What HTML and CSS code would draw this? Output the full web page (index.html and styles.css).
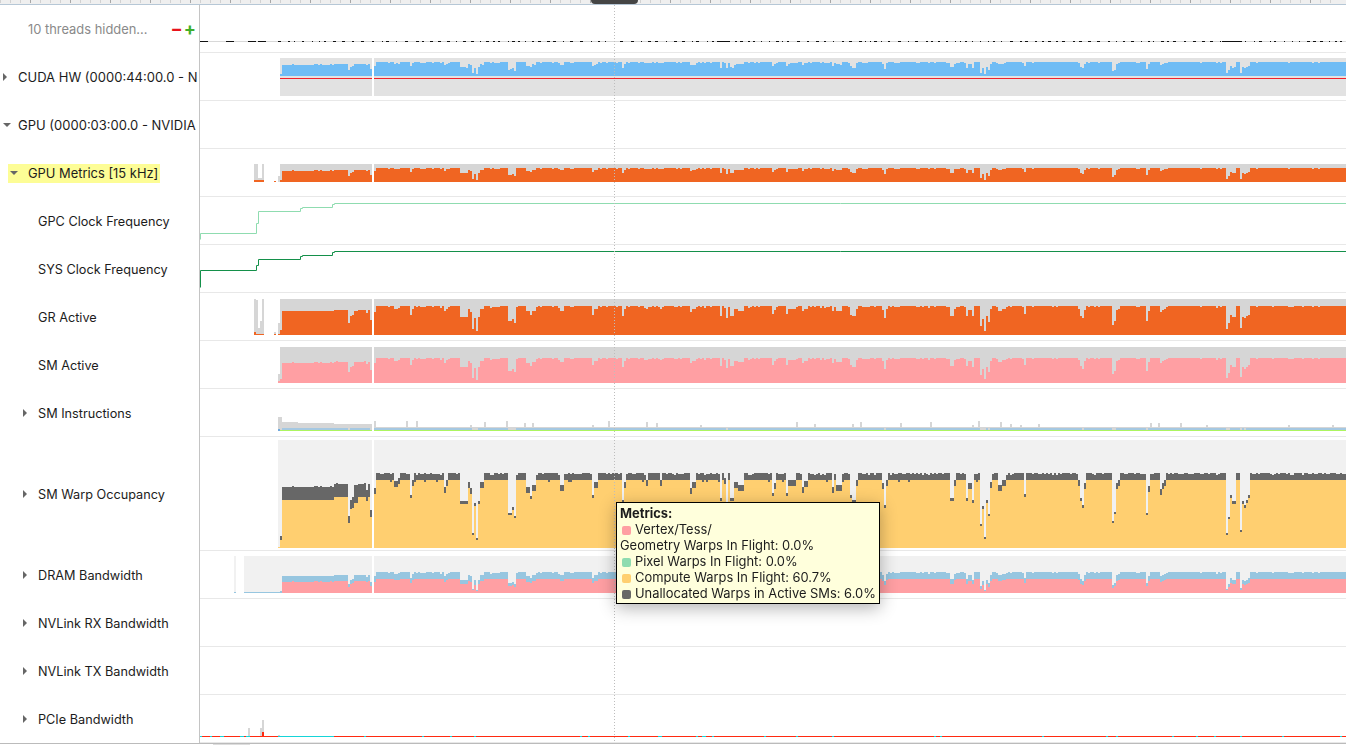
FILE: index.html
```html
<!DOCTYPE html>
<html lang="en">

<head>
    <meta charset="UTF-8">
    <title>GPU Trace Timeline</title>
    <link rel="stylesheet" href="styles.css">
</head>

<body>
    <div class="ruler">
        <div class="ruler-handle"></div>
    </div>

    <div class="timeline">
        <div class="row">
            <div class="label label-hidden">
                <span>10 threads hidden...</span>
                <span class="thread-btns"><span class="minus">&minus;</span><span class="plus">+</span></span>
            </div>
            <div class="track"><canvas id="threads" data-top="5" width="1146" height="47"></canvas></div>
        </div>
        <div class="row">
            <div class="label indent-0"><i class="caret-right"></i><span>CUDA HW (0000:44:00.0 - N</span></div>
            <div class="track"><canvas id="cuda" data-top="53" width="1146" height="47"></canvas></div>
        </div>
        <div class="row">
            <div class="label indent-0"><i class="caret-down"></i><span>GPU (0000:03:00.0 - NVIDIA</span></div>
            <div class="track"></div>
        </div>
        <div class="row">
            <div class="label indent-1">
                <div class="selected"><i class="caret-down"></i><span>GPU Metrics [15 kHz]</span></div>
            </div>
            <div class="track"><canvas id="metrics" data-top="149" width="1146" height="47"></canvas></div>
        </div>
        <div class="row">
            <div class="label indent-2"><span>GPC Clock Frequency</span></div>
            <div class="track"><canvas id="gpc" data-top="197" width="1146" height="47"></canvas></div>
        </div>
        <div class="row">
            <div class="label indent-2"><span>SYS Clock Frequency</span></div>
            <div class="track"><canvas id="sys" data-top="245" width="1146" height="47"></canvas></div>
        </div>
        <div class="row">
            <div class="label indent-2"><span>GR Active</span></div>
            <div class="track"><canvas id="gr" data-top="293" width="1146" height="47"></canvas></div>
        </div>
        <div class="row">
            <div class="label indent-2"><span>SM Active</span></div>
            <div class="track"><canvas id="sm" data-top="341" width="1146" height="47"></canvas></div>
        </div>
        <div class="row">
            <div class="label indent-2"><i class="caret-right"></i><span>SM Instructions</span></div>
            <div class="track"><canvas id="instr" data-top="389" width="1146" height="47"></canvas></div>
        </div>
        <div class="row row-tall">
            <div class="label indent-2"><i class="caret-right"></i><span>SM Warp Occupancy</span></div>
            <div class="track"><canvas id="warp" data-top="437" width="1146" height="113"></canvas></div>
        </div>
        <div class="row">
            <div class="label indent-2"><i class="caret-right"></i><span>DRAM Bandwidth</span></div>
            <div class="track"><canvas id="dram" data-top="551" width="1146" height="47"></canvas></div>
        </div>
        <div class="row">
            <div class="label indent-2"><i class="caret-right"></i><span>NVLink RX Bandwidth</span></div>
            <div class="track"></div>
        </div>
        <div class="row">
            <div class="label indent-2"><i class="caret-right"></i><span>NVLink TX Bandwidth</span></div>
            <div class="track"></div>
        </div>
        <div class="row">
            <div class="label indent-2"><i class="caret-right"></i><span>PCIe Bandwidth</span></div>
            <div class="track"><canvas id="pcie" data-top="695" width="1146" height="48"></canvas></div>
        </div>
    </div>

    <div class="hscroll">
        <div class="hscroll-thumb"></div>
    </div>

    <div class="cursor-line"></div>

    <div class="tooltip">
        <div class="tooltip-title">Metrics:</div>
        <div class="tooltip-line"><i class="swatch swatch-pink"></i>Vertex/Tess/</div>
        <div class="tooltip-line">Geometry Warps In Flight: 0.0%</div>
        <div class="tooltip-line"><i class="swatch swatch-green"></i>Pixel Warps In Flight: 0.0%</div>
        <div class="tooltip-line"><i class="swatch swatch-yellow"></i>Compute Warps In Flight: 60.7%</div>
        <div class="tooltip-line"><i class="swatch swatch-grey"></i>Unallocated Warps in Active SMs: 6.0%</div>
    </div>

    <script src="script.js"></script>
</body>

</html>
```

FILE: styles.css
```css
* {
    box-sizing: border-box;
}

html,
body {
    height: 100%;
}

body {
    margin: 0;
    background-color: #fff;
    font-family: 'Inter', 'Liberation Sans', sans-serif;
    font-size: 12.9px;
    color: #1c1c1c;
    overflow: hidden;
}

.ruler {
    position: relative;
    height: 5px;
    background-color: #efefef;
    background-image:
        repeating-linear-gradient(90deg, #a8a8a8 0, #a8a8a8 1px, transparent 1px, transparent 40px),
        repeating-linear-gradient(90deg, #d2d2d2 0, #d2d2d2 1px, transparent 1px, transparent 10px);
    background-size: 100% 3px;
    background-position: -10px 0;
    background-repeat: no-repeat;
    border-bottom: 1px solid #b6c7d6;
}

.ruler-handle {
    position: absolute;
    top: 0;
    left: 591px;
    width: 47px;
    height: 4px;
    background-color: #454545;
    border-radius: 0 0 5px 5px;
}

.row {
    display: flex;
    height: 48px;
}

.row-tall {
    height: 114px;
}

.label {
    display: flex;
    align-items: center;
    flex: 0 0 200px;
    border-right: 1px solid #c4c4c4;
    white-space: nowrap;
    overflow: hidden;
}

.track {
    flex: 1;
    border-bottom: 1px solid #e8e8e8;
    overflow: hidden;
}

.track canvas {
    display: block;
}

.indent-0 {
    padding-left: 3px;
    font-size: 13px;
}

.indent-0 i {
    width: 15px;
}

.indent-1 {
    padding-left: 8px;
}

.indent-2 {
    padding-left: 38px;
    font-size: 12.7px;
}

.indent-2 .caret-right {
    margin-left: -15px;
    width: 15px;
}

.label-hidden {
    padding-left: 28px;
    color: #8a8a8a;
}

.thread-btns {
    display: flex;
    gap: 1px;
    margin-left: 23px;
    font-size: 18px;
    font-weight: 700;
    line-height: 1;
}

.minus {
    color: #e8121c;
}

.plus {
    color: #3fae2a;
}

.selected {
    display: flex;
    align-items: center;
    height: 19px;
    padding: 0 2px 0 2px;
    background-color: #fdfd96;
}

.selected i {
    width: 18px;
}

.caret-right,
.caret-down {
    display: block;
    flex: none;
    position: relative;
    height: 8px;
}

.caret-right::before {
    content: "";
    position: absolute;
    top: 0;
    left: 0;
    border-left: 4px solid #666;
    border-top: 4px solid transparent;
    border-bottom: 4px solid transparent;
}

.caret-down::before {
    content: "";
    position: absolute;
    top: 2px;
    left: 0;
    border-top: 4px solid #666;
    border-left: 4px solid transparent;
    border-right: 4px solid transparent;
}

.hscroll {
    height: 2px;
    border-top: 1px solid #bbb;
}

.hscroll-thumb {
    width: 37px;
    height: 1px;
    margin-left: 213px;
    background-color: #ddd;
}

.cursor-line {
    position: absolute;
    top: 5px;
    left: 614px;
    width: 1px;
    height: 738px;
    background-image: repeating-linear-gradient(180deg, #bdbdbd 0, #bdbdbd 1px, transparent 1px, transparent 3px);
}

.tooltip {
    position: absolute;
    top: 502px;
    left: 616px;
    width: 264px;
    height: 102px;
    padding: 3px 3px;
    background-color: #ffffdc;
    border: 1px solid #000;
    box-shadow: 0 4px 16px rgba(0, 0, 0, 0.3);
    line-height: 16px;
    white-space: nowrap;
}

.tooltip-title {
    font-weight: 700;
}

.tooltip-line {
    display: flex;
    align-items: center;
}

.swatch {
    display: block;
    flex: none;
    width: 9px;
    height: 9px;
    margin: 0 4px 0 2px;
    border-radius: 2px;
}

.swatch-pink {
    background-color: #ff9fa3;
}

.swatch-green {
    background-color: #8fdcb0;
}

.swatch-yellow {
    background-color: #ffcf70;
}

.swatch-grey {
    background-color: #676767;
}
```

FILE: script.js
```js
// Sampled trace data is stored as dips from the steady state, one column is 2px wide
const END_X = 1346;
const COL = 2;

const DIPS = [
    [374, 376, 494], [394, 398, 487], [398, 400, 484], [410, 412, 498], [412, 414, 486], [444, 446, 493], [446, 448, 486],
    [460, 468, 504], [468, 470, 488], [470, 472, 494], [472, 474, 535], [474, 476, 506], [476, 478, 540],
    [478, 480, 504], [480, 484, 488], [508, 512, 515], [512, 514, 510], [514, 516, 518],
    [526, 530, 493], [530, 532, 499], [532, 536, 491], [560, 564, 491], [592, 594, 498],
    [594, 598, 488], [622, 624, 503], [624, 626, 488], [646, 648, 486], [660, 662, 486], [690, 692, 494],
    [692, 696, 488], [720, 722, 501], [724, 726, 484], [726, 728, 506], [730, 734, 501],
    [734, 738, 488], [738, 744, 491], [772, 774, 496], [774, 776, 489], [786, 788, 496], [788, 796, 486],
    [802, 804, 493], [804, 808, 487], [832, 834, 493], [836, 842, 491], [850, 852, 498], [852, 856, 503],
    [856, 858, 486], [882, 884, 489], [884, 886, 508], [886, 888, 486], [950, 954, 501], [954, 956, 486],
    [966, 968, 501], [968, 972, 489], [972, 974, 503], [980, 982, 526], [982, 984, 509], [984, 986, 539],
    [986, 988, 503], [988, 990, 516], [990, 992, 488], [998, 1002, 491], [1002, 1006, 486],
    [1024, 1026, 497], [1078, 1080, 486], [1080, 1082, 501], [1082, 1084, 508], [1084, 1086, 489],
    [1112, 1114, 523], [1114, 1116, 514], [1116, 1118, 489], [1118, 1120, 486],
    [1146, 1148, 515], [1148, 1150, 492], [1160, 1162, 495], [1162, 1164, 489], [1164, 1166, 486],
    [1226, 1228, 535], [1228, 1230, 519], [1230, 1232, 498], [1232, 1236, 504],
    [1240, 1242, 532], [1242, 1244, 504], [1244, 1246, 508], [1246, 1248, 503], [1248, 1250, 498]
];

// the first run before the gap has its own levels
const FIRST_RUN = [
    [278, 280, 547, 547], [280, 282, 540, 536], [282, 334, 500, 487], [334, 348, 497, 484],
    [348, 350, 523, 516], [350, 352, 509, 500], [352, 354, 508, 497], [354, 358, 503, 485],
    [358, 366, 497, 484], [366, 368, 501, 490], [368, 370, 497, 484], [370, 372, 517, 510]
];

let seed = 7;
function rand() {
    seed = (seed * 16807) % 2147483647;
    return seed / 2147483647;
}

function buildColumns() {
    const cols = [];
    for (let x = 278; x < END_X; x += COL) {
        if (x === 372) continue;
        let yt = 480;
        let gt = 473 + (rand() < 0.4 ? 1 : 0);
        const r = rand();
        if (x > 374 && r < 0.08) {
            gt = 475;
        }
        if (x > 374 && x < 1000 && r > 0.9) {
            yt = 482;
        }
        const wob = x < 1000 ? (rand() < 0.28 ? 1 : 0) : (rand() < 0.1 ? 1 : 0);
        cols.push({ x: x, yt: yt, gt: gt, wob: wob });
    }
    cols.forEach(c => {
        FIRST_RUN.forEach(s => {
            if (c.x >= s[0] && c.x < s[1]) {
                c.yt = s[2];
                c.gt = s[3];
                c.wob = 0;
                if (s[1] - s[0] > 4 && rand() < 0.3) c.gt -= 1;
            }
        });
        DIPS.forEach(d => {
            if (c.x >= d[0] && c.x < d[1]) {
                c.yt = d[2];
                const band = d[2] > 510 ? 2 : (d[2] > 495 ? 3 : 6);
                c.gt = d[2] - band;
            }
        });
        c.active = Math.min(1, (548 - c.gt) / 75);
    });
    return cols;
}

const columns = buildColumns();

function getCtx(id) {
    const canvas = document.getElementById(id);
    const ctx = canvas.getContext("2d");
    // draw with page coordinates
    ctx.translate(-200, -Number(canvas.dataset.top));
    return ctx;
}

function rect(ctx, color, x, y, w, h) {
    ctx.fillStyle = color;
    ctx.fillRect(x, y, w, h);
}

// grey background band with a bar that follows the activity of the GPU
function drawActivity(ctx, top, bottom, full, bg, color) {
    columns.forEach(c => {
        if (c.x < 280) return;
        rect(ctx, bg, c.x, top, COL, bottom - top);
        const h = Math.round(full * c.active) - (c.active > 0.95 ? c.wob : 0);
        rect(ctx, color, c.x, bottom - h, COL, h);
    });
}

function drawThreads() {
    const ctx = getCtx("threads");
    rect(ctx, "#d8d8d8", 200, 41, 1146, 1);
    const fixed = [[200, 8], [226, 8], [248, 8], [258, 8], [717, 13], [1222, 18]];
    fixed.forEach(d => rect(ctx, "#111", d[0], 41, d[1], 1));
    let x = 278;
    while (x < END_X) {
        const on = 1 + Math.floor(rand() * 3);
        rect(ctx, "#111", x, 41, on, 1);
        x += on + 3 + Math.floor(rand() * 6);
    }
}

function drawCuda() {
    const ctx = getCtx("cuda");
    columns.forEach(c => {
        if (c.x < 280) return;
        rect(ctx, "#e2e2e2", c.x, 58, COL, 38);
        const h = Math.max(2, Math.round(14 * c.active) - c.wob);
        rect(ctx, "#6fbcf5", c.x, 76 - h, COL, h);
        rect(ctx, "#f0202c", c.x, 78, COL, 1);
    });
}

function drawMetrics() {
    const ctx = getCtx("metrics");
    drawActivity(ctx, 164, 182, 14, "#d6d6d6", "#f06522");
    rect(ctx, "#d6d6d6", 254, 164, 4, 18);
    rect(ctx, "#d6d6d6", 258, 178, 4, 4);
    rect(ctx, "#d6d6d6", 262, 164, 2, 18);
    rect(ctx, "#f06522", 254, 180, 10, 2);
    rect(ctx, "#f06522", 274, 181, 2, 1);
    rect(ctx, "#d6d6d6", 278, 176, 2, 6);
}

function drawStep(ctx, color, points) {
    ctx.strokeStyle = color;
    ctx.lineWidth = 1;
    ctx.beginPath();
    points.forEach((p, i) => {
        if (i === 0) ctx.moveTo(p[0] + 0.5, p[1] + 0.5);
        else ctx.lineTo(p[0] + 0.5, p[1] + 0.5);
    });
    ctx.stroke();
}

function drawClocks() {
    drawStep(getCtx("gpc"), "#8fdcb0", [
        [200, 239], [200, 233], [256, 233], [256, 223], [258, 223], [258, 211], [300, 211],
        [300, 208], [302, 208], [302, 207], [332, 207], [332, 204], [334, 204], [334, 203], [1346, 203]
    ]);
    drawStep(getCtx("sys"), "#14904a", [
        [200, 287], [200, 270], [256, 270], [256, 265], [258, 265], [258, 259], [300, 259],
        [300, 256], [302, 256], [302, 255], [332, 255], [332, 252], [334, 252], [334, 251], [1346, 251]
    ]);
}

function drawGr() {
    const ctx = getCtx("gr");
    drawActivity(ctx, 299, 335, 29, "#d6d6d6", "#f06522");
    rect(ctx, "#d6d6d6", 254, 299, 2, 36);
    rect(ctx, "#d6d6d6", 256, 300, 2, 35);
    rect(ctx, "#d6d6d6", 258, 328, 4, 7);
    rect(ctx, "#d6d6d6", 260, 321, 2, 14);
    rect(ctx, "#d6d6d6", 262, 299, 2, 36);
    rect(ctx, "#f06522", 254, 332, 2, 3);
    rect(ctx, "#f06522", 256, 334, 8, 1);
    rect(ctx, "#d6d6d6", 274, 332, 2, 3);
    rect(ctx, "#f06522", 274, 334, 2, 1);
    rect(ctx, "#d6d6d6", 278, 323, 2, 12);
    rect(ctx, "#f06522", 278, 334, 2, 1);
}

function drawSm() {
    const ctx = getCtx("sm");
    drawActivity(ctx, 347, 383, 25, "#d6d6d6", "#ff9fa3");
    rect(ctx, "#d6d6d6", 278, 374, 2, 9);
    rect(ctx, "#ff9fa3", 278, 381, 2, 2);
    rect(ctx, "#ff9fa3", 280, 379, 2, 4);
}

function drawInstructions() {
    const ctx = getCtx("instr");
    columns.forEach(c => {
        let top = 427;
        if (c.x < 282) top = 417;
        else if (c.x < 298) top = 422;
        else if (c.x < 334) top = 423;
        else if (c.x < 372) top = 424;
        else if (rand() < 0.08) top = 421 + Math.floor(rand() * 5);
        rect(ctx, "#d6d6d6", c.x, top, COL, 428 - top);
        rect(ctx, c.active > 0.6 ? "#a5c8e2" : "#d6d6d6", c.x, 428, COL, 2);
        if (c.x >= 280) rect(ctx, "#adf55f", c.x, 430, COL, 1);
    });
    rect(ctx, "#6fa8dc", 278, 429, 2, 2);
}

function drawWarp() {
    const ctx = getCtx("warp");
    columns.forEach(c => {
        rect(ctx, "#f1f1f1", c.x, 440, COL, 108);
        if (c.x >= 280) rect(ctx, "#676767", c.x, c.gt, COL, c.yt - c.gt);
        rect(ctx, "#ffcf70", c.x, c.yt, COL, 548 - c.yt);
    });
}

function drawDram() {
    const ctx = getCtx("dram");
    rect(ctx, "#f1f1f1", 234, 556, 2, 37);
    rect(ctx, "#97c6e0", 234, 592, 2, 1);
    rect(ctx, "#f1f1f1", 244, 556, 36, 37);
    rect(ctx, "#97c6e0", 244, 592, 38, 1);
    columns.forEach(c => {
        if (c.x < 280) return;
        rect(ctx, "#f1f1f1", c.x, 556, COL, 37);
        if (c.x < 282) {
            rect(ctx, "#97c6e0", c.x, 591, COL, 2);
            return;
        }
        const total = Math.round(21 * c.active) - (c.active > 0.95 ? c.wob : 0);
        const pink = Math.round(14 * c.active);
        rect(ctx, "#97c6e0", c.x, 593 - total, COL, total);
        rect(ctx, "#ff9fa3", c.x, 593 - pink, COL, pink);
    });
}

function drawPcie() {
    const ctx = getCtx("pcie");
    rect(ctx, "#d6d6d6", 248, 728, 2, 8);
    rect(ctx, "#d6d6d6", 260, 728, 2, 8);
    rect(ctx, "#d6d6d6", 262, 720, 2, 16);
    rect(ctx, "#ff2a10", 262, 732, 2, 4);
    rect(ctx, "#d6d6d6", 278, 735, 2, 1);
    for (let x = 200; x < END_X; x += COL) {
        let p = x < 1000 ? 0.05 : 0.03;
        if (x < 250) p = 0.3;
        if (x >= 278 && x < 334) p = 1;
        rect(ctx, rand() < p ? "#16d4d8" : "#ff2a10", x, 736, COL, 1);
    }
}

drawThreads();
drawCuda();
drawMetrics();
drawClocks();
drawGr();
drawSm();
drawInstructions();
drawWarp();
drawDram();
drawPcie();
```
